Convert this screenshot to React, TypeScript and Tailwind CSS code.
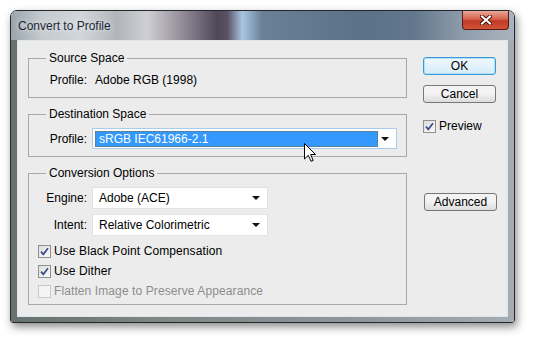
function Check({ checked, disabled }: { checked?: boolean; disabled?: boolean }) {
  return (
    <span
      className={`flex h-[13px] w-[13px] shrink-0 items-center justify-center border ${
        disabled
          ? "border-[#c9c9c9] bg-[#f4f4f4]"
          : "border-[#8e8f8f] bg-[linear-gradient(135deg,#dcdcdc,#fbfbfb)]"
      }`}
    >
      {checked && (
        <svg width="11" height="11" viewBox="0 0 11 11">
          <path d="M2 5.6 L4.3 8.3 L9 2.2" fill="none" stroke="#3b4c86" strokeWidth="1.7" />
        </svg>
      )}
    </span>
  );
}

function Arrow() {
  return (
    <svg width="8" height="4" viewBox="0 0 8 4">
      <path d="M0 0 H8 L4 4 Z" fill="#111" />
    </svg>
  );
}

function Select({ value, width }: { value: string; width: string }) {
  return (
    <div className={`flex h-[22px] ${width} items-center justify-between border border-[#e2e2e2] bg-white pl-[6px] pr-[7px]`}>
      <span>{value}</span>
      <Arrow />
    </div>
  );
}

function Row({ label, children }: { label: string; children: React.ReactNode }) {
  return (
    <div className="flex items-center">
      <span className="w-[59px] pr-[1px] text-right">{label}</span>
      <div className="ml-[4px]">{children}</div>
    </div>
  );
}

function Button({ label, focused }: { label: string; focused?: boolean }) {
  return (
    <div
      className={`flex h-[18px] w-[73px] items-center justify-center rounded-[3px] border ${
        focused
          ? "border-[#3c9ad8] bg-[linear-gradient(to_bottom,#f0f8fd,#d6ecf9)] shadow-[inset_0_0_0_1px_#aee0f8]"
          : "border-[#777] bg-[linear-gradient(to_bottom,#f3f3f3_45%,#dcdcdc)]"
      }`}
    >
      {label}
    </div>
  );
}

export default function App() {
  return (
    <div className="relative min-h-screen bg-white pl-[10px] pt-[10px] font-['Liberation_Sans',Arial,sans-serif] text-[12px] leading-[14px] text-black">
      <div className="flex h-[313px] w-[505px] flex-col overflow-hidden rounded-t-[7px] rounded-b-[3px] border border-[#22282c] shadow-[2px_4px_9px_rgba(0,0,0,0.45),inset_0_0_0_1px_rgba(255,255,255,0.35)]">
        {/* title bar */}
        <div className="flex h-[29px] shrink-0 justify-between bg-[linear-gradient(to_right,#9aa4ac_0%,#c4cace_6%,#d2d6da_14%,#b2b4ba_21%,#cfd0d4_27%,#9d96a2_33%,#4f4858_41%,#5a5264_43%,#a8c6e2_46%,#6a8096_50%,#5b7187_70%,#62778c_80%,#8f9dab_90%,#aab4be_100%)]">
          <span className="pl-[7px] pt-[8px] text-[#1a2636] [text-shadow:0_0_6px_rgba(255,255,255,0.9)]">
            Convert to Profile
          </span>
          <div className="mr-[5px] flex h-[19px] w-[47px] items-center justify-center rounded-b-[4px] border border-t-0 border-[#5a1a12] bg-[linear-gradient(to_bottom,#e9a89a,#d7624c_45%,#c23a24_55%,#d0543a)]">
            <svg width="12" height="10" viewBox="0 0 12 10">
              <path d="M2 1.5 L10 8.5 M10 1.5 L2 8.5" stroke="#4a1410" strokeWidth="4" strokeLinecap="square" />
              <path d="M2 1.5 L10 8.5 M10 1.5 L2 8.5" stroke="#fff" strokeWidth="2" strokeLinecap="square" />
            </svg>
          </div>
        </div>
        {/* frame + client */}
        <div className="flex flex-1 px-[6px] pb-[5px] bg-[linear-gradient(to_right,#66726f,#7e8885_30%,#8f989b_70%,#a6adb2)]">
          <div className="flex flex-1 border border-[#dfe5ea] bg-[#ececec] pl-[10px] pt-[10px]">
            {/* left column */}
            <div className="flex w-[379px] flex-col gap-[9px]">
              <fieldset className="h-[47px] border border-[#a8a8a8] px-0">
                <legend className="ml-[17px] px-[3px]">Source Space</legend>
                <div className="pt-[8px]">
                  <Row label="Profile:">
                    <span className="pl-[3px]">Adobe RGB (1998)</span>
                  </Row>
                </div>
              </fieldset>
              <fieldset className="h-[50px] border border-[#a8a8a8]">
                <legend className="ml-[17px] px-[3px]">Destination Space</legend>
                <div className="pt-[7px]">
                  <Row label="Profile:">
                    <div className="flex h-[21px] w-[305px] items-center border border-[#a9cbec] bg-white pl-[2px] pr-[7px]">
                      <div className="flex h-[16px] w-[283px] items-center border border-dotted border-[#8a6a3a] bg-[#3399ff] pl-[3px] text-white">
                        sRGB IEC61966-2.1
                      </div>
                      <div className="flex flex-1 justify-end">
                        <Arrow />
                      </div>
                    </div>
                  </Row>
                </div>
              </fieldset>
              <fieldset className="h-[139px] border border-[#a8a8a8]">
                <legend className="ml-[17px] px-[3px]">Conversion Options</legend>
                <div className="flex flex-col gap-[5px] pt-[7px]">
                  <Row label="Engine:">
                    <Select value="Adobe (ACE)" width="w-[176px]" />
                  </Row>
                  <Row label="Intent:">
                    <Select value="Relative Colorimetric" width="w-[176px]" />
                  </Row>
                </div>
                <div className="flex flex-col pl-[9px] pt-[5px] tracking-[0.1px]">
                  <label className="flex h-[20px] items-center gap-[3px]">
                    <Check checked />
                    Use Black Point Compensation
                  </label>
                  <label className="flex h-[20px] items-center gap-[3px]">
                    <Check checked />
                    Use Dither
                  </label>
                  <label className="flex h-[20px] items-center gap-[3px] text-[#8d8d8d]">
                    <Check disabled />
                    Flatten Image to Preserve Appearance
                  </label>
                </div>
              </fieldset>
            </div>
            {/* right column */}
            <div className="ml-[16px] flex flex-col pt-[6px]">
              <Button label="OK" focused />
              <div className="mt-[10px]">
                <Button label="Cancel" />
              </div>
              <label className="mt-[16px] flex items-center gap-[3px]">
                <Check checked />
                Preview
              </label>
              <div className="ml-[1px] mt-[60px]">
                <Button label="Advanced" />
              </div>
            </div>
          </div>
        </div>
      </div>
      {/* mouse pointer */}
      <svg className="absolute left-[304px] top-[143px]" width="12" height="19" viewBox="0 0 12 19">
        <path d="M0.5 0.5 V16 L4.3 12.3 L7 18.3 L9.2 17.4 L6.6 11.5 H11.5 Z" fill="#fff" stroke="#000" strokeWidth="1" strokeLinejoin="round" />
      </svg>
    </div>
  );
}
